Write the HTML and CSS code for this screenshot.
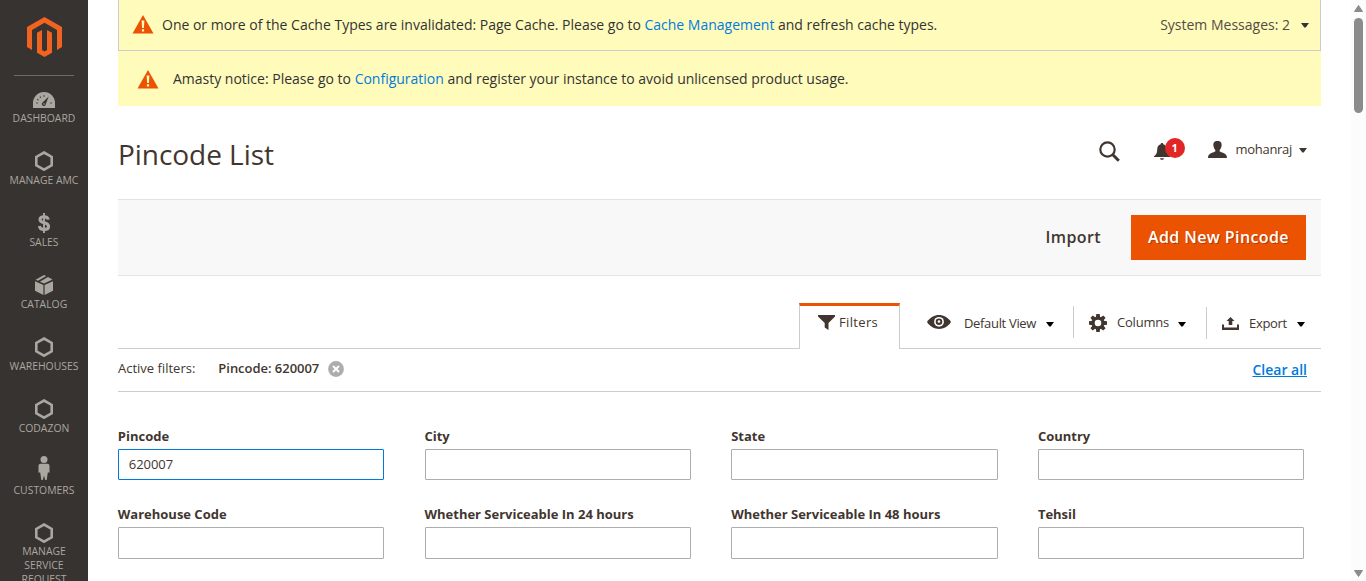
FILE: index.html
```html
<!DOCTYPE html>
<html lang="en">
<head>
<meta charset="utf-8">
<title>Pincode List</title>
<link rel="stylesheet" href="styles.css">
</head>
<body>
<svg class="defs" width="0" height="0">
  <symbol id="hex" viewBox="0 0 18 20"><path d="M9 1.500 16.700 5.900v8.400L9 18.700 1.300 14.300V5.900z" fill="none" stroke="currentColor" stroke-width="2.600"/></symbol>
  <symbol id="warn" viewBox="0 0 22 19"><path d="M11 0 21.500 18.500H.5z" fill="#eb5202"/><path d="M9.600 5.500h2.800l-.5 7.500h-1.800zM9.900 14.300h2.200v2.200H9.900z" fill="#fffbbb"/></symbol>
  <symbol id="caret" viewBox="0 0 8 5"><path d="M0 0h8L4.700 4.500H3.300z" fill="currentColor"/></symbol>
</svg>
<div class="layout">
  <nav class="sidebar">
    <svg class="logo" viewBox="0 0 35 40"><path d="M17.500 0 35 10v20l-5 2.900V12.900L17.500 5.700 5 12.900v20L0 30V10z" fill="#f26322"/><path d="m15 12.900-5 2.900v19.900l7.500 4.300 7.500-4.300V15.800l-5-2.900v20.200l-2.500 1.500-2.500-1.500z" fill="#f26322"/></svg>
    <ul class="menu">
      <li class="item"><span class="icon icon-low"><svg width="22" height="16" viewBox="0 0 22 16"><path d="M0 16v-5a11 11 0 0 1 22 0v5z" fill="currentColor"/><path d="M3.200 11h1.500M4.200 7.300l1.300.8M7 4.500l.7 1.200M11 3.300v1.400M17.300 11h1.500" stroke="#373330" stroke-width="1.100"/><path d="m15.700 4.600-2.900 7.300a2 2 0 1 1-3-1.600z" fill="#373330"/><circle cx="11" cy="12" r=".8" fill="currentColor"/></svg></span><span>Dashboard</span></li>
      <li class="item"><span class="icon"><svg width="18" height="20"><use href="#hex"/></svg></span><span>Manage AMC</span></li>
      <li class="item"><span class="icon"><svg width="14" height="20" viewBox="0 0 13 20"><path d="M10.700 6.600C10.400 4.500 8.900 3.700 6.500 3.700c-2.300 0-4 .9-4 2.800 0 4.600 8.600 2 8.600 7 0 2-1.800 3-4.400 3-2.900 0-4.500-1.200-4.800-3.500" fill="none" stroke="currentColor" stroke-width="3.100"/><path d="M6.500 0v20" stroke="currentColor" stroke-width="1.900"/></svg></span><span>Sales</span></li>
      <li class="item"><span class="icon"><svg width="18" height="20" viewBox="0 0 18 20"><path d="M0 6.300 8.400 10v10L0 15.700zM18 6.300 9.600 10v10l8.400-4.300zM9 0l2.200 1L3 5.800.6 4.700zM13 1.900l4.500 2.700L9 8.600 4.900 6.700z" fill="currentColor"/></svg></span><span>Catalog</span></li>
      <li class="item"><span class="icon"><svg width="18" height="20"><use href="#hex"/></svg></span><span>Warehouses</span></li>
      <li class="item"><span class="icon"><svg width="18" height="20"><use href="#hex"/></svg></span><span>Codazon</span></li>
      <li class="item"><span class="icon"><svg class="person" width="12" height="24" viewBox="0 0 12 24"><circle cx="6" cy="3.600" r="3.500" fill="currentColor"/><path d="M2.500 7.800h7C11 7.800 11.500 9 11.500 10v6.500H9.800L8.700 24H7.200L6 19.500 4.800 24H3.300L2.200 16.500H.5V10c0-1 .5-2.200 2-2.200z" fill="currentColor"/></svg></span><span>Customers</span></li>
      <li class="item"><span class="icon"><svg width="18" height="20"><use href="#hex"/></svg></span><span>Manage Service Request</span></li>
    </ul>
  </nav>
  <main class="page">
    <div class="message message-main">
      <svg width="22" height="19"><use href="#warn"/></svg>
      <p class="message-text">One or more of the Cache Types are invalidated: Page Cache. Please go to <a class="link">Cache Management</a> and refresh cache types.</p>
      <span class="message-count">System Messages: 2</span>
      <svg class="caret" width="8" height="5"><use href="#caret"/></svg>
    </div>
    <div class="message message-sub">
      <svg width="22" height="19"><use href="#warn"/></svg>
      <p class="message-text">Amasty notice: Please go to <a class="link">Configuration</a> and register your instance to avoid unlicensed product usage.</p>
    </div>
    <header class="header">
      <h1 class="title">Pincode List</h1>
      <svg class="search" width="21" height="21" viewBox="0 0 21 21"><circle cx="8.500" cy="8.500" r="7.200" fill="none" stroke="#41362f" stroke-width="2.200"/><path d="m13.800 13.800 6 6" stroke="#41362f" stroke-width="3"/></svg>
      <span class="bell"><svg width="16" height="17" viewBox="0 0 16 17"><path d="M8 0c.9 0 1.300.6 1.300 1.200 2.500.8 3.500 2.800 3.500 5.300 0 3.500.8 5 3.200 6.800v.7H0v-.7c2.400-1.800 3.200-3.300 3.200-6.800 0-2.500 1-4.500 3.500-5.300C6.700.6 7.100 0 8 0zM6 15.200h4c-.3 2-3.700 2-4 0z" fill="#41362f"/></svg><span class="badge">1</span></span>
      <svg class="user" width="19" height="17" viewBox="0 0 19 17"><path d="M9.500 0c3.300 0 4.400 1.900 4.100 4.500-.2 2.200-1.100 3.500-2 4.800-.2 1 .3 1.500 1.700 1.900 3 .9 5.700 1.900 5.700 5.800H0c0-3.900 2.700-4.900 5.700-5.800 1.400-.4 1.900-.9 1.700-1.900-.9-1.300-1.800-2.600-2-4.800C5.100 1.900 6.200 0 9.500 0z" fill="#41362f"/></svg>
      <span class="user-name">mohanraj</span>
      <svg class="caret" width="8" height="5"><use href="#caret"/></svg>
    </header>
    <div class="actions">
      <button class="btn">Import</button>
      <button class="btn btn-primary">Add New Pincode</button>
    </div>
    <div class="toolbar">
      <div class="tab tab-active"><svg width="17" height="15" viewBox="0 0 17 15"><path d="M0 0h17v1.500L10.500 8v7L6.700 12.500V8L0 1.500z" fill="#41362f"/></svg><span>Filters</span></div>
      <div class="tab tab-view"><svg width="24" height="14" viewBox="0 0 24 14"><path d="M0 7C6-2.300 18-2.300 24 7 18 16.300 6 16.300 0 7z" fill="#41362f"/><circle cx="12" cy="6.800" r="4.900" fill="#fff"/><circle cx="12" cy="6.800" r="3.300" fill="#41362f"/><circle cx="12" cy="6.500" r="1.300" fill="#fff"/></svg><span>Default View</span><svg class="caret" width="8" height="5"><use href="#caret"/></svg></div>
      <div class="tab tab-columns"><svg class="gear" width="18" height="18" viewBox="-9 -9 18 18"><g fill="#41362f"><path id="tooth" d="M-1.700-9h3.400l.5 4h-4.400zM-1.700 9h3.400l.5-4h-4.400z"/><use href="#tooth" transform="rotate(45)"/><use href="#tooth" transform="rotate(90)"/><use href="#tooth" transform="rotate(135)"/></g><circle r="4.900" fill="none" stroke="#41362f" stroke-width="3.200"/></svg><span>Columns</span><svg class="caret" width="8" height="5"><use href="#caret"/></svg></div>
      <div class="tab tab-export"><svg width="17" height="13" viewBox="0 0 17 13"><path d="M0 7.500h2v3h13v-3h2V13H0zM8.500 0l4 4H10.300v4H6.700V4H4.500z" fill="#41362f"/></svg><span>Export</span><svg class="caret" width="8" height="5"><use href="#caret"/></svg></div>
    </div>
    <div class="active-filters">
      <span class="active-label">Active filters:</span>
      <span class="active-value">Pincode: 620007</span>
      <svg class="remove" width="16" height="16" viewBox="0 0 16 16"><circle cx="8" cy="8" r="7.900" fill="#adadad"/><path d="m5 5 6 6m0-6-6 6" stroke="#fff" stroke-width="2"/></svg>
      <a class="link clear">Clear all</a>
    </div>
    <form class="filters">
      <label class="field"><span>Pincode</span><input class="input input-focus" value="620007"></label>
      <label class="field"><span>City</span><input class="input"></label>
      <label class="field"><span>State</span><input class="input"></label>
      <label class="field"><span>Country</span><input class="input"></label>
      <label class="field"><span>Warehouse Code</span><input class="input"></label>
      <label class="field"><span>Whether Serviceable In 24 hours</span><input class="input"></label>
      <label class="field"><span>Whether Serviceable In 48 hours</span><input class="input"></label>
      <label class="field"><span>Tehsil</span><input class="input"></label>
    </form>
  </main>
  <div class="scrollbar">
    <svg width="9" height="7" viewBox="0 0 9 7"><path d="M4.500.5 8.500 6.500h-8z" fill="#8b8b8b" stroke="#8b8b8b" stroke-linejoin="round"/></svg>
    <div class="thumb"></div>
    <svg width="9" height="7" viewBox="0 0 9 7"><path d="M4.500 6.500 8.500.5h-8z" fill="#8b8b8b" stroke="#8b8b8b" stroke-linejoin="round"/></svg>
  </div>
</div>
</body>
</html>
```
FILE: styles.css
```css
* { box-sizing: border-box; }
body { margin: 0; height: 581px; overflow: hidden; background: #fff; color: #41362f; font: 13px/18px "Open Sans", sans-serif; }
svg { display: block; flex: none; }
.defs { position: absolute; }
.layout { display: flex; height: 581px; overflow: hidden; }
.link { color: #007bdb; }

.sidebar { flex: none; width: 88px; background: #373330; color: #aaa6a0; overflow: hidden; }
.logo { width: 35px; height: 40px; margin: 17px auto 18px 27px; }
.menu { list-style: none; margin: 0 14px; padding: 12px 0 0; border-top: 1px solid #736963; }
.item { height: 62px; margin: 0 -8px; display: flex; flex-direction: column; align-items: center; text-align: center; text-transform: uppercase; font-size: 10.400px; line-height: 14px; }
.icon { height: 23px; padding-bottom: 2px; display: flex; align-items: center; flex: none; }
.icon-low { padding-bottom: 0; }
.person { margin-top: -6px; }
.item:last-child span:last-child { width: 60px; line-height: 13.800px; }

.page { flex: none; width: 1203px; margin-left: 30px; }
.message { display: flex; align-items: center; background: #fffbbb; color: #333; font-size: 14px; }
.message-text { margin: 0; white-space: nowrap; letter-spacing: -.006px; }
.message-main { height: 51px; padding: 0 11px 1px 13px; border: 1px solid #ccc; border-top: 0; }
.message-main .message-text { margin-left: 8px; }
.message-count { margin-left: auto; color: #544b45; }
.message-main .caret { margin: 1px 0 0 11px; }
.message-sub { height: 55px; padding: 1px 0 0 19px; }
.message-sub .message-text { margin-left: 14px; }

.header { height: 93px; display: flex; align-items: flex-start; padding: 29px 14px 0 0; }
.title { margin: 0 auto 0 0; font-size: 28px; line-height: 38px; font-weight: 400; letter-spacing: -.05px; }
.search { margin: 6px 34px 0 0; }
.bell { position: relative; margin: 8px 38px 0 0; }
.badge { position: absolute; left: 11px; top: -5px; width: 20px; height: 20px; border-radius: 50%; background: #e22626; color: #fff; font-size: 11px; line-height: 19px; font-weight: 700; text-align: center; }
.user { margin: 6px 9px 0 0; }
.user-name { margin-top: 5px; letter-spacing: -.3px; }
.header .caret { margin: 13px 0 0 7px; }

.actions { height: 77px; display: flex; justify-content: flex-end; align-items: center; gap: 14px; padding-right: 15px; background: #f8f8f8; border: solid #e3e3e3; border-width: 1px 0; }
.btn { height: 45px; padding: 0 16px 2px; border: 0; background: none; color: #41362f; font: 600 16px/22px "Open Sans", sans-serif; letter-spacing: .4px; }
.btn-primary { width: 175px; padding: 0 0 2px; background: #eb5202; color: #fff; text-shadow: 1px 1px 0 rgba(0,0,0,.25); }

.toolbar { height: 73px; display: flex; align-items: flex-end; justify-content: flex-end; border-bottom: 1px solid #ccc; }
.toolbar .caret { color: #000; }
.tab { display: flex; align-items: center; white-space: nowrap; }
.tab-active { width: 101px; height: 46px; margin-bottom: -1px; padding: 0 0 11px 18px; gap: 4px; border: 1px solid #ccc; border-top: 3px solid #eb5202; border-bottom: 0; background: #fff; font-weight: 500; letter-spacing: .35px; }
.tab-view { width: 174px; height: 32px; margin-bottom: 10px; padding-left: 27px; border-right: 1px solid #ccc; }
.tab-view span { margin: 2px 10px 0 13px; letter-spacing: -.33px; }
.tab-columns { width: 132px; height: 32px; margin-bottom: 10px; padding-left: 15px; }
.tab-columns span { margin: 0 9px 0 10px; letter-spacing: -.2px; }
.gear { margin: 2px 0 0; }
.tab-export { width: 115px; height: 32px; margin-bottom: 9px; padding-left: 15px; border-left: 1px solid #ccc; }
.tab-export span { margin: 0 10px; letter-spacing: -.3px; }
.tab .caret { margin-top: 4px; }
.tab-export .caret { margin-top: 2px; }

.active-filters { height: 43px; display: flex; align-items: center; padding: 0 14px 4px 0; border-bottom: 1px solid #ccc; }
.active-value { margin-left: 23px; font-weight: 600; letter-spacing: -.03px; }
.remove { margin: 1px 0 0 9px; }
.clear { margin-left: auto; font-size: 14px; font-weight: 600; text-decoration: underline; padding-top: 4px; }

.filters { display: grid; grid-template-columns: repeat(4, 266.600px); column-gap: 40.100px; padding-top: 35px; margin-left: -.2px; }
.field { display: flex; flex-direction: column; height: 78px; font-weight: 700; line-height: 18px; letter-spacing: -.01px; }
.input { width: 100%; height: 31px; margin-top: 4px; padding: 0 10px 2px; border: 1px solid #adadad; border-radius: 1px; background: #fff; color: #41362f; font: 13px "Open Sans", sans-serif; letter-spacing: -.05px; outline: 0; }
.field:nth-child(n+5) .input { height: 32px; }
.input-focus { border-color: #007bdb; }

.scrollbar { flex: none; width: 15px; margin-left: 30px; padding: 5px 0 4px; background: #fcfcfc; display: flex; flex-direction: column; align-items: center; }
.thumb { width: 9px; height: 95px; margin: 6px 0 auto; border-radius: 5px; background: #8b8b8b; }
```
